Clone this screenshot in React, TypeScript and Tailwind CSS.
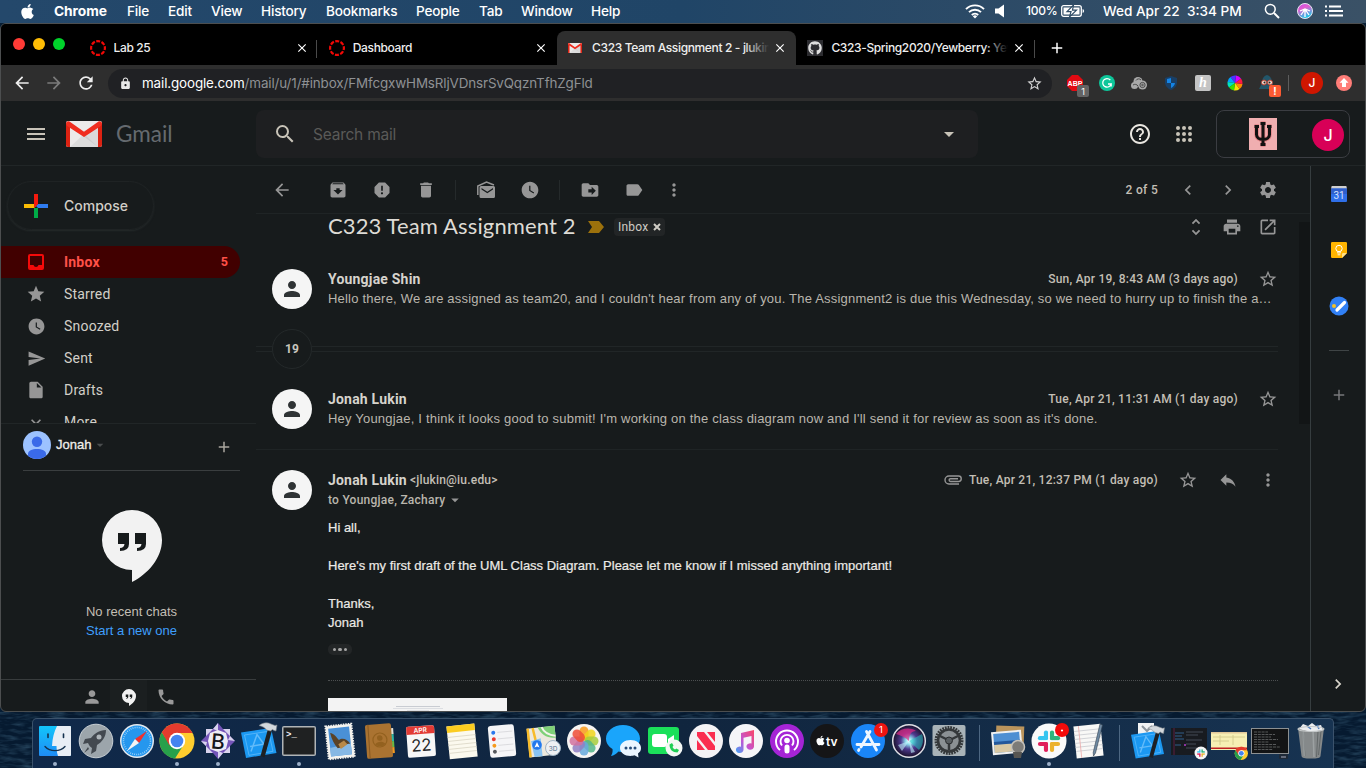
import React from "react";
import {
  MdArchive, MdReport, MdDelete, MdWatchLater, MdLabel, MdMoreVert, MdSettings, MdPrint,
  MdOpenInNew, MdUnfoldMore, MdStarBorder, MdReply, MdStar, MdSend, MdInsertDriveFile,
  MdExpandMore, MdPerson, MdPhone, MdMenu, MdSearch, MdHelpOutline, MdLock,
  MdArrowBack, MdArrowForward, MdRefresh, MdArrowDropDown, MdChevronRight, MdChevronLeft,
  MdAdd, MdClose,
} from "react-icons/md";
import { FaApple, FaGithub } from "react-icons/fa";

const SANS = "font-['Inter','Liberation_Sans',sans-serif]";

/* ---------- macOS menu bar ---------- */

const menus: [string, string][] = [
  ["File", "w-[41px]"], ["Edit", "w-[43px]"], ["View", "w-[50px]"], ["History", "w-[65px]"],
  ["Bookmarks", "w-[90px]"], ["People", "w-[63px]"], ["Tab", "w-[42px]"], ["Window", "w-[70px]"], ["Help", "w-[40px]"],
];

function MenuBar() {
  return (
    <div className={`flex h-[23px] shrink-0 items-center bg-linear-to-r from-[#24486b] via-[#204567] to-[#3a5166] pl-[19px] text-[13.6px] font-medium text-white ${SANS}`}>
      <FaApple className="mr-[18px] size-[17px]" />
      <span className="w-[73px] text-[13.8px] font-bold tracking-[-0.1px]">Chrome</span>
      {menus.map(([m, w]) => (
        <span key={m} className={`${w} tracking-[-0.2px]`}>{m}</span>
      ))}
      <div className="ml-auto flex items-center">
        <svg width="20" height="16" viewBox="0 0 20 16" fill="none" stroke="#fff" strokeWidth="1.9">
          <path d="M1 6.2a12.6 12.6 0 0 1 18 0M4 9.2a8.4 8.4 0 0 1 12 0M6.8 12a4.6 4.6 0 0 1 6.4 0" />
          <path d="M10 15.5L7.800 13.300a3.200 3.200 0 0 1 4.400 0z" fill="#fff" stroke="none" />
        </svg>
        <svg className="ml-[10px]" width="10" height="14" viewBox="0 0 10 14"><path d="M0 4.500h3.500L9 .5v13L3.500 9.500H0z" fill="#fff" /></svg>
        <span className="ml-[21px] w-[35px] text-[12px] tracking-[-0.2px]">100%</span>
        <svg width="24" height="12" viewBox="0 0 24 12" fill="none">
          <rect x=".7" y=".7" width="19.600" height="10.600" rx="2" stroke="#fff" strokeWidth="1.300" />
          <rect x="2.500" y="2.500" width="16" height="7" fill="#fff" />
          <path d="M12.500 0L6 6.700h4L8.500 12 15.500 5.200h-4z" fill="#fff" stroke="#2f4c66" strokeWidth="1.200" />
          <path d="M21.600 4v4c2-.8 2-3.200 0-4z" fill="#fff" />
        </svg>
        <span className="ml-[18px] w-[161px] whitespace-pre">Wed Apr 22  3:34 PM</span>
        <svg width="16" height="16" viewBox="0 0 16 16" fill="none" stroke="#fff" strokeWidth="1.500"><circle cx="6.300" cy="6.300" r="4.900" /><path d="M10 10l5 5" strokeWidth="1.900" /></svg>
        <svg className="ml-[17px]" width="16" height="16" viewBox="0 0 16 16">
          <defs><linearGradient id="sb" x1="0" y1="0" x2=".4" y2="1"><stop stopColor="#c04be8" /><stop offset=".4" stopColor="#e25bd0" /><stop offset="1" stopColor="#21c8e8" /></linearGradient></defs>
          <circle cx="8" cy="8" r="7.500" fill="url(#sb)" stroke="#e9e6f2" />
          <path d="M8 6L4 12M8 6l4 6M8 6v8M3 8l5-2 5 2" stroke="#fff" strokeWidth="1.300" fill="none" />
        </svg>
        <svg className="ml-[12px] mr-[23px]" width="18" height="12" viewBox="0 0 18 12" stroke="#fff" strokeWidth="1.900"><path d="M0 1.500h2M4 1.500h12M0 6h2M4 6h14M0 10.500h2M4 10.500h14" /></svg>
      </div>
    </div>
  );
}

/* ---------- Chrome tab strip and toolbar ---------- */

function GmailM({ className }: { className?: string }) {
  return (
    <svg className={className} viewBox="0 0 36 26">
      <rect x="0" y="0" width="36" height="26" rx="2" fill="#eceaea" />
      <path d="M4 26L18 13l14 13z" fill="#dcdcdc" />
      <path d="M32 4v22L13 12z" fill="#000" opacity=".07" />
      <path d="M0 2.500V24a2 2 0 0 0 2 2h2V5zM36 2.500V24a2 2 0 0 1-2 2h-2V5z" fill="#dc2212" />
      <path d="M0 2.500C0 .5 2 0 3.500.5L18 10.800 32.500.5C34 0 36 .5 36 2.500c0 1.200-.6 2-1.500 2.700L18 16 1.500 5.200C.6 4.500 0 3.700 0 2.500z" fill="#f02d1f" />
    </svg>
  );
}

const Canvas = () => (
  <svg className="size-4" viewBox="0 0 16 16"><circle cx="8" cy="8" r="6.900" fill="none" stroke="#f00806" strokeWidth="2.200" strokeDasharray="4 1.419" strokeDashoffset="2" /></svg>
);

function Tab({ icon, title, active, line, fade }: { icon: React.ReactNode; title: string; active?: boolean; line?: boolean; fade?: boolean }) {
  return (
    <div className={`relative flex h-[34px] w-[239.300px] shrink-0 items-center rounded-t-[8px] pl-[11.500px] ${active ? "bg-[#2e2e2e]" : ""}`}>
      {icon}
      <div className="relative ml-2 w-[177px] overflow-hidden whitespace-nowrap text-[12px] font-medium tracking-[-0.36px] text-[#eee]">
        {title}
        {fade && <span className={`absolute inset-y-0 right-0 w-6 bg-linear-to-r from-transparent ${active ? "to-[#2e2e2e]" : "to-black"}`} />}
      </div>
      <MdClose className="ml-[4px] size-[14px] text-white" />
      {line && <span className="absolute right-0 top-[9px] h-[18px] w-px bg-[#4a4a4a]" />}
    </div>
  );
}

function TabStrip() {
  return (
    <div className={`flex h-[41px] shrink-0 items-end bg-black ${SANS}`}>
      <div className="flex h-[41px] w-[77px] items-center gap-2 pb-[2px] pl-[12px]">
        <span className="size-3 rounded-full bg-[#ff3b36]" />
        <span className="size-3 rounded-full bg-[#ffbd05]" />
        <span className="size-3 rounded-full bg-[#00d32b]" />
      </div>
      <Tab icon={<Canvas />} title="Lab 25" line />
      <Tab icon={<Canvas />} title="Dashboard" />
      <Tab icon={<span className="flex size-4 items-center"><GmailM className="w-[14px]" /></span>} title="C323 Team Assignment 2 - jlukin@iu.edu" active fade />
      <Tab icon={<span className="flex size-4 items-center justify-center bg-[#2c2c30]"><FaGithub className="size-[14px] text-[#ddd]" /></span>} title="C323-Spring2020/Yewberry: Yewberry" line fade />
      <div className="flex h-[34px] items-center pl-[13px]"><MdAdd className="size-[18px] text-white" /></div>
    </div>
  );
}

function Extensions() {
  return (
    <div className="flex items-center pl-[15px]">
      <span className="relative mr-4 size-4">
        <svg className="size-4" viewBox="0 0 16 16"><path d="M5 0h6l5 5v6l-5 5H5l-5-5V5z" fill="#e20a12" /><text x="8" y="10.600" textAnchor="middle" fontSize="7" fontWeight="700" fontFamily="Liberation Sans" fill="#fff">ABP</text></svg>
        <span className="absolute left-[10px] top-[10px] flex h-3 w-3 items-center justify-center rounded-[2px] bg-[#646464] text-[9px] leading-none text-white">1</span>
      </span>
      <svg className="mr-4 size-4" viewBox="0 0 16 16"><circle cx="8" cy="8" r="8" fill="#0dc69a" /><path d="M11.300 5a4.300 4.300 0 1 0 .9 4H9M12.200 9v2.500" fill="none" stroke="#fff" strokeWidth="1.300" /></svg>
      <svg className="mr-4 size-4" viewBox="0 0 16 16"><g fill="#a9a9a9"><circle cx="7" cy="6.500" r="4.500" /><circle cx="3.500" cy="10.500" r="3.500" /><circle cx="11.500" cy="10" r="4.500" /></g><g fill="none" stroke="#4a4a4a" strokeWidth="1"><circle cx="11.500" cy="10" r="2.600" /><circle cx="11.500" cy="10" r=".8" /><path d="M7 11a3.500 3.500 0 0 0-5-1M10 5a3 3 0 0 0-5 .5" /></g></svg>
      <svg className="mr-4 size-4" viewBox="0 0 16 16"><path d="M8 1l6 2v4c0 4-2.500 6.500-6 8-3.500-1.500-6-4-6-8V3z" fill="#193f66" /><path d="M8 3v5H4V4zM8 8h4c-.5 2.500-2 4-4 5z" fill="#1484e6" /></svg>
      <span className="mr-4 flex size-4 items-center justify-center rounded-[2px] bg-[#c4c4c4] font-['Liberation_Serif',serif] text-[14px] font-bold italic leading-none text-white">h</span>
      <svg className="mr-4 size-4" viewBox="-8 -8 16 16">
        {["#f6e500", "#ff8a00", "#ff1744", "#d400ff", "#4a33ff", "#00a2ff", "#00e5c0", "#38e000"].map((c, i) => (
          <path key={c} d="M0 0L2.900-7A7.500 7.500 0 0 1 7-2.900z" fill={c} transform={`rotate(${i * -45 + 120})`} />
        ))}
      </svg>
      <span className="relative mr-[13px] size-4">
        <svg className="size-4" viewBox="0 0 16 16"><path d="M8 0c4 1 5 5 6 10l2 4H0l2-4C3 5 4 1 8 0z" fill="#22566a" /><circle cx="5" cy="7.500" r="2.500" fill="#f1ded3" stroke="#b33a2b" /><circle cx="11" cy="7.500" r="2.500" fill="#f1ded3" stroke="#b33a2b" /><circle cx="5.500" cy="7.500" r="1" fill="#222" /><circle cx="10.500" cy="7.500" r="1" fill="#222" /></svg>
        <span className="absolute left-[10px] top-[10px] flex h-3 w-3 items-center justify-center rounded-[2px] bg-[#fb5a32] text-[10px] font-bold leading-none text-white">!</span>
      </span>
      <span className="h-4 w-px bg-[#5d5d5d]" />
      <span className="ml-[12px] flex size-[22px] items-center justify-center rounded-full bg-[#cf1600] text-[12px] font-medium text-white">J</span>
      <svg className="ml-[13px] size-4" viewBox="0 0 16 16"><circle cx="8" cy="8" r="8" fill="#ff7d78" /><path d="M8 3l4.500 4.800H10V12H6V7.800H3.500z" fill="#fff" /></svg>
    </div>
  );
}

function Toolbar() {
  return (
    <div className={`flex h-[36px] shrink-0 items-center bg-[#2e2e2e] pl-[11px] ${SANS}`}>
      <MdArrowBack className="size-[20px] text-[#eee]" />
      <MdArrowForward className="ml-[12px] size-[20px] text-[#7b7b7b]" />
      <MdRefresh className="ml-[12px] size-[20px] text-[#eee]" />
      <div className="ml-[12px] flex h-[29px] w-[944px] items-center rounded-full bg-[#202124] pl-[11px]">
        <MdLock className="size-[13px] text-[#e8e8e8]" />
        <span className="ml-[10px] text-[13.400px] tracking-[-0.12px] text-[#8f9194]"><span className="text-white">mail.google.com</span>/mail/u/1/#inbox/FMfcgxwHMsRljVDnsrSvQqznTfhZgFld</span>
        <MdStarBorder className="ml-auto mr-[9px] size-[17px] text-[#d0d0d0]" />
      </div>
      <Extensions />
    </div>
  );
}

/* ---------- Gmail ---------- */

function Header() {
  return (
    <header className="flex h-[65px] shrink-0 items-center border-b border-[#212627] pl-[23px] pr-[15px] pt-[2px] text-[#c8c3b8]">
      <MdMenu className="size-6" />
      <GmailM className="ml-[18px] w-[36px]" />
      <span className="ml-[14px] w-[140px] font-['Lato',sans-serif] text-[22.500px] text-[#656a6f]">Gmail</span>
      <div className="flex h-[48px] w-[722px] items-center rounded-lg bg-[#1e1f21] pl-[17px] pr-[17px]">
        <MdSearch className="size-6" />
        <span className={`ml-4 mt-px text-[15.500px] tracking-[-0.230px] text-[#5a5a58] ${SANS}`}>Search mail</span>
        <MdArrowDropDown className="ml-auto size-6" />
      </div>
      <MdHelpOutline className="ml-auto size-6 text-[#e9e6e0]" />
      <svg className="ml-5 size-6" viewBox="0 0 24 24" fill="currentColor">
        {[6, 12, 18].map((y) => [6, 12, 18].map((x) => <circle key={`${x}-${y}`} cx={x} cy={y} r="2" />))}
      </svg>
      <div className="ml-5 flex h-[48px] w-[134px] items-center justify-end rounded-lg border border-[#3b3d42] pr-[5px]">
        <svg className="h-[32px] w-[28px]" viewBox="0 0 28 32">
          <rect width="28" height="32" fill="#f0aeb0" />
          <path d="M14 5v22M11.500 5.500h5M11.500 26.500h5M7.500 8.500v8c0 3 2.500 5 6.500 5s6.500-2 6.500-5v-8M5.500 8.500h4.500M18 8.500h4.500" fill="none" stroke="#e28286" strokeWidth="4.500" />
          <path d="M14 5v22M11.500 5.500h5M11.500 26.500h5M7.500 8.500v8c0 3 2.500 5 6.500 5s6.500-2 6.500-5v-8M5.500 8.500h4.500M18 8.500h4.500" fill="none" stroke="#111" strokeWidth="3" />
        </svg>
        <span className={`ml-[35px] mt-[2px] flex size-8 items-center justify-center rounded-full bg-[#d80057] text-[16px] font-medium text-white ${SANS}`}>J</span>
      </div>
    </header>
  );
}

const InboxIcon = () => (
  <svg className="size-4" viewBox="0 0 16 16"><path fillRule="evenodd" d="M2 0h12a2 2 0 0 1 2 2v12a2 2 0 0 1-2 2H2a2 2 0 0 1-2-2V2a2 2 0 0 1 2-2zm0 2v9h3.500a2.600 2.600 0 0 0 5 0H14V2z" fill="#f40a0a" /></svg>
);

function HangoutsMark({ className, ink }: { className: string; ink: string }) {
  return (
    <svg className={className} viewBox="0 0 60 72">
      <path d="M30 0a30 30 0 0 1 30 30c0 18-14 34-30 42V60A30 30 0 0 1 30 0z" fill="#f2f2f2" />
      <path d="M16 23h11v11q0 7-9 7v-3q4 0 4.500-4H16zM33 23h11v11q0 7-9 7v-3q4 0 4.500-4H33z" fill={ink} />
    </svg>
  );
}

function Sidebar() {
  const rows: [string, React.ReactNode][] = [
    ["Starred", <MdStar className="size-5" />],
    ["Snoozed", <MdWatchLater className="size-[19px]" />],
    ["Sent", <MdSend className="size-[19px]" />],
    ["Drafts", <MdInsertDriveFile className="size-5" />],
    ["More", <MdExpandMore className="size-5" />],
  ];
  return (
    <aside className="flex w-[255px] shrink-0 flex-col">
      <div className="h-[257px] shrink-0 overflow-hidden pt-[15px] font-['Roboto',sans-serif] text-[14px] text-[#d2cfc8]">
        <div className={`ml-[6px] flex h-[49px] w-[147px] items-center rounded-full border border-[#1f2324] pl-[16px] text-[14px] font-medium shadow-[0_1px_2px_#252a2b] ${SANS}`}>
          <svg className="size-6" viewBox="0 0 24 24"><path d="M10 0h4v10l-2 2-2-2z" fill="#f41a0e" /><path d="M0 10h10l2 2-2 2H0z" fill="#fbbc04" /><path d="M14 10h10v4H14l-2-2z" fill="#2f7cf0" /><path d="M10 14h4v10h-4z" fill="#00ac47" /><path d="M14 10l-4 4v-4z" fill="#f41a0e" /></svg>
          <span className="ml-[16px]">Compose</span>
        </div>
        <div className="mt-[16px] flex h-8 w-[239px] items-center rounded-r-full bg-[#410000] pl-[27px] pr-[12px] font-bold text-[#ff5148]">
          <InboxIcon />
          <span className="ml-5 tracking-[0.2px]">Inbox</span>
          <span className="ml-auto text-[12.500px]">5</span>
        </div>
        {rows.map(([label, icon]) => (
          <div key={label} className="flex h-8 items-center pl-[25px]">
            <span className="flex w-5 justify-center text-[#969696]">{icon}</span>
            <span className="ml-[18px] tracking-[0.2px]">{label}</span>
          </div>
        ))}
      </div>
      <div className="flex min-h-0 flex-1 flex-col border-t border-[#212627] font-['Liberation_Sans',sans-serif] text-[13px]">
        <div className="ml-[22px] flex h-[47px] w-[217px] items-center border-b border-[#3a3e3f]">
          <svg className="-mt-[5px] size-7" viewBox="0 0 28 28"><defs><clipPath id="av"><circle cx="14" cy="14" r="14" /></clipPath></defs><g clipPath="url(#av)"><rect width="28" height="28" fill="#9cc2ff" /><circle cx="14" cy="10.800" r="5.200" fill="#3a6ae8" /><path d="M5 28v-5c0-3.500 4-5 9-5s9 1.500 9 5v5z" fill="#3a6ae8" /></g></svg>
          <span className="-mt-[5px] ml-[5px] text-[#f0eeea] [-webkit-text-stroke:0.3px_#f0eeea]">Jonah</span>
          <MdArrowDropDown className="-mt-[5px] ml-px size-4 text-[#4b4e4f]" />
          <MdAdd className="ml-auto mr-[7px] size-[18px] text-[#aaa79e]" />
        </div>
        <div className="flex flex-1 flex-col items-center pl-[6px] pt-[39px]">
          <HangoutsMark className="h-[72px] w-[60px]" ink="#171b1c" />
          <span className="mt-[20px] leading-[19px] text-[#c3bfb5]">No recent chats</span>
          <span className="leading-[19px] text-[#3f9ffc]">Start a new one</span>
        </div>
        <div className="flex h-[32px] shrink-0 border-t border-[#383c3d] pl-[72px] text-[#999]">
          <span className="flex w-[37px] items-center justify-center pt-[3px]"><MdPerson className="size-[20px]" /></span>
          <span className="flex w-[37px] items-center justify-center bg-[#1b1f20] pt-[3px]"><HangoutsMark className="h-[17px] w-[14px]" ink="#171b1c" /></span>
          <span className="flex w-[37px] items-center justify-center pt-[3px]"><MdPhone className="size-[20px]" /></span>
        </div>
      </div>
    </aside>
  );
}

function ActionBar() {
  return (
    <div className="flex h-[48px] shrink-0 items-center border-b border-[#1f2425] pl-4 pr-8 text-[#969696]">
      <MdArrowBack className="size-[20px]" />
      <MdArchive className="ml-[36px] size-[20px]" />
      <MdReport className="ml-[24px] size-[20px]" />
      <MdDelete className="ml-[24px] size-[20px]" />
      <span className="ml-[19px] h-5 w-px bg-[#252a2b]" />
      <svg className="ml-[20px] size-[20px]" viewBox="0 0 20 20"><path d="M1.800 15V6L10.500 2l7.500 3" fill="none" stroke="#969696" strokeWidth="1.500" /><path fillRule="evenodd" d="M5 6h12.500A1.500 1.500 0 0 1 19 7.500V16.500a1.500 1.500 0 0 1-1.500 1.500H5a1.500 1.500 0 0 1-1.500-1.500v-9A1.500 1.500 0 0 1 5 6zm.5 2l5.800 3.800L17 8v1.600l-5.700 3.700-5.800-3.700z" fill="#969696" /></svg>
      <MdWatchLater className="ml-[24px] size-[20px]" />
      <span className="ml-[19px] h-5 w-px bg-[#252a2b]" />
      <svg className="ml-[20px] size-[20px]" viewBox="0 0 24 24"><path d="M20 6h-8l-2-2H4c-1.100 0-2 .9-2 2v12c0 1.100.9 2 2 2h16c1.100 0 2-.9 2-2V8c0-1.100-.9-2-2-2zm-6 12v-3h-4v-4h4V8l5 5-5 5z" fill="#969696" /></svg>
      <MdLabel className="ml-[24px] size-[20px]" />
      <MdMoreVert className="ml-[20px] size-5" />
      <span className="ml-auto mr-5 font-['Roboto',sans-serif] text-[12px] font-medium tracking-[0.300px] text-[#c3bfb5]">2 of 5</span>
      <MdChevronLeft className="mr-5 size-5" />
      <MdChevronRight className="mr-5 size-5" />
      <MdSettings className="size-5" />
    </div>
  );
}

const Avatar = () => (
  <span className="flex size-10 shrink-0 items-center justify-center rounded-full bg-[#f5f5f5]"><MdPerson className="size-6 text-[#2f3335]" /></span>
);

function Collapsed({ name, date, text }: { name: string; date: string; text: string }) {
  return (
    <div className="flex h-[40px] gap-4 pl-4 font-['Roboto',sans-serif]">
      <Avatar />
      <div className="min-w-0 flex-1">
        <div className="flex h-5 items-center">
          <span className="text-[14px] font-bold tracking-[0.200px] text-[#d6d3cc]">{name}</span>
          <span className="ml-auto text-[12px] font-medium tracking-[0.240px] text-[#c3bfb5]">{date}</span>
          <MdStarBorder className="ml-[20px] size-5 text-[#969696]" />
        </div>
        <div className="h-5 truncate pr-[5px] font-['Liberation_Sans',sans-serif] text-[13px] leading-[19px] tracking-[0.200px] text-[#bab6ad]">{text}</div>
      </div>
    </div>
  );
}

function Conversation() {
  return (
    <div className="flex w-[1022px] shrink-0 flex-col font-['Roboto',sans-serif]">
      <div className="flex h-[26px] items-center pl-[72px] text-[#969696]">
        <span className="-mt-[3px] w-[248px] whitespace-nowrap font-['Lato',sans-serif] text-[22px] tracking-[0.130px] text-[#dedbd5]">C323 Team Assignment 2</span>
        <svg className="ml-[12px] h-3 w-4" viewBox="0 0 16 12"><path d="M0 0h11l5 6-5 6H0l4-6z" fill="#9c710c" /></svg>
        <span className="ml-[10px] flex h-[18px] items-center rounded-[4px] bg-[#222526] px-1 text-[12px] tracking-[0.2px] text-[#cfccc4]">Inbox<svg className="ml-[5px] size-[8px]" viewBox="0 0 8 8" stroke="currentColor" strokeWidth="2"><path d="M1 1l6 6M7 1L1 7" /></svg></span>
        <MdUnfoldMore className="ml-auto size-[22px]" />
        <MdPrint className="ml-[15px] size-5" />
        <MdOpenInNew className="ml-4 size-5" />
      </div>
      <div className="mt-[29px]"><Collapsed name="Youngjae Shin" date="Sun, Apr 19, 8:43 AM (3 days ago)" text="Hello there, We are assigned as team20, and I couldn't hear from any of you. The Assignment2 is due this Wednesday, so we need to hurry up to finish the assignment soon." /></div>
      <div className="mt-[20px] flex h-10 items-center">
        <span className="h-[6px] w-4 border-y border-[#212627]" />
        <span className="flex size-10 items-center justify-center rounded-full border border-[#24292a] text-[12px] font-bold text-[#c9c6be]">19</span>
        <span className="h-[6px] flex-1 border-y border-[#212627]" />
      </div>
      <div className="mt-[20px]"><Collapsed name="Jonah Lukin" date="Tue, Apr 21, 11:31 AM (1 day ago)" text="Hey Youngjae, I think it looks good to submit! I'm working on the class diagram now and I'll send it for review as soon as it's done." /></div>
      <div className="mt-[20px] flex flex-1 gap-4 border-t border-[#1f2425] pl-4 pt-[20px]">
        <Avatar />
        <div className="flex min-w-0 flex-1 flex-col">
          <div className="flex h-5 shrink-0 items-center text-[#969696]">
            <span className="text-[14px] font-bold tracking-[0.200px] text-[#d6d3cc]">Jonah Lukin</span>
            <span className="ml-[3px] text-[12px] font-medium tracking-[0.200px] text-[#c3bfb5]">&lt;jlukin@iu.edu&gt;</span>
            <svg className="ml-auto h-[10px] w-[18px]" viewBox="0 0 18 10" fill="none" stroke="#969696" strokeWidth="1.400"><path d="M15 9H5a4 4 0 0 1 0-8h9.500a2.700 2.700 0 0 1 0 5.500H6.500a1.400 1.400 0 0 1 0-2.800H14" /></svg>
            <span className="ml-[7px] text-[12px] font-medium tracking-[0.230px] text-[#c3bfb5]">Tue, Apr 21, 12:37 PM (1 day ago)</span>
            <MdStarBorder className="ml-5 size-5" />
            <MdReply className="ml-5 size-[20px]" />
            <MdMoreVert className="ml-5 size-5" />
          </div>
          <div className="flex h-5 shrink-0 items-center text-[12px] font-medium tracking-[0.250px] text-[#bab6ad]">to Youngjae, Zachary<MdArrowDropDown className="ml-px size-[18px] text-[#969696]" /></div>
          <div className="mt-[8px] whitespace-pre font-['Liberation_Sans',sans-serif] text-[13px] leading-[19px] text-[#eceae6] [-webkit-text-stroke:0.2px_#eceae6]">{"Hi all,\n\nHere's my first draft of the UML Class Diagram. Please let me know if I missed anything important!\n\nThanks,\nJonah"}</div>
          <div className="mt-[12px] flex h-[11px] w-6 shrink-0 items-center justify-center gap-[2px] rounded-[5px] bg-[#232627]">
            <i className="size-[3.500px] rounded-full bg-[#a6a6a6]" /><i className="size-[3.500px] rounded-full bg-[#a6a6a6]" /><i className="size-[3.500px] rounded-full bg-[#a6a6a6]" />
          </div>
          <div className="mt-[25px] w-[950px] border-t border-dotted border-[#4c4f50]" />
          <div className="mt-[17px] flex h-[14px] w-[179px] flex-col items-center bg-[#f3f3f3] pt-[8px]">
            <div className="h-px w-[44px] bg-[#c9ccd2]" /><div className="mt-px h-px w-[50px] bg-[#dcdee2]" /><div className="mt-px h-px w-[22px] bg-[#dcdee2]" />
          </div>
        </div>
      </div>
    </div>
  );
}

function SidePanel() {
  return (
    <div className="flex w-[55px] shrink-0 flex-col items-center border-l border-[#363d3f] pl-[2px] pt-[20px]">
      <svg className="size-4" viewBox="0 0 16 16"><rect x=".3" width="15.400" height="5" rx="1" fill="#cfcfcf" /><rect y="2.500" width="16" height="13.500" rx="1" fill="#2f6fe8" /><path d="M0 2.500h16V8H0z" fill="#2f5fcb" /><text x="8" y="12.800" textAnchor="middle" fontSize="10" fontFamily="Roboto" fill="#d5e2ff">31</text></svg>
      <svg className="mt-10 size-4" viewBox="0 0 16 16"><path d="M1.200 0h13.600A1.200 1.200 0 0 1 16 1.200V11l-5 5H1.200A1.200 1.200 0 0 1 0 14.800V1.200A1.200 1.200 0 0 1 1.200 0z" fill="#ffb400" /><path d="M16 11l-5 5v-3.800A1.200 1.200 0 0 1 12.200 11z" fill="#ffe08a" /><circle cx="8" cy="6.500" r="3.200" fill="none" stroke="#fff" strokeWidth="1" /><path d="M6.300 11h3.400M6.600 12.800h2.800M6.800 9.300v1.500M9.200 9.300v1.500" stroke="#fff" strokeWidth=".9" /></svg>
      <svg className="mt-[38px] size-5" viewBox="0 0 20 20"><circle cx="10" cy="10" r="9.500" fill="#3180f5" /><path d="M8 14l7.500-7.500" stroke="#fff" strokeWidth="3.200" strokeLinecap="round" /><circle cx="5" cy="10" r="2" fill="#f6c026" /></svg>
      <span className="mt-[34px] h-px w-5 shrink-0 bg-[#3f4445]" />
      <MdAdd className="mt-[35px] size-[18px] text-[#77787a]" />
      <MdChevronRight className="mb-[17px] mr-[2px] mt-auto size-5 text-[#d8d4ca]" />
    </div>
  );
}

/* ---------- Dock ---------- */

const S = ({ children }: { children: React.ReactNode }) => <svg className="size-9 overflow-visible" viewBox="0 0 36 36">{children}</svg>;

const Chrome = () => (
  <>
    <circle cx="18" cy="18" r="17.500" fill="#ffcd2e" />
    <path d="M2.800 9.300A17.500 17.500 0 0 0 16 35.400L24.500 22 18 18 11.500 22z" fill="#27a04b" />
    <path d="M2.800 9.300L10.500 22.500 18 10h15.500A17.500 17.500 0 0 0 2.800 9.300z" fill="#e33b2e" />
    <circle cx="18" cy="18" r="8.200" fill="#fff" /><circle cx="18" cy="18" r="6.300" fill="#4484f0" />
  </>
);

const Hammer = () => (
  <g><path d="M27.500 4L19.500 33l4 1.500 8-29z" fill="#1d2024" /><path d="M18 2.500c4-3 8-3.500 12-1.500l4 1.500 2-.5-1 6-2-.5-1.500-1-2 1.500-4-1c-1.500-2.500-4-3.500-7.500-4.500z" fill="#d3d8dc" stroke="#7b8288" strokeWidth=".6" /></g>
);

const Xcode = () => (
  <><path d="M0 9.500L30 5l5.500 25L5 35z" fill="#1b98f2" /><path d="M3.500 12l24-3.700 4.500 20-24 4z" fill="none" stroke="#5fbafb" strokeWidth=".8" /><path d="M10 28.500l6-17 10 14M9 23.500l18-3" stroke="#62bbfa" strokeWidth="1.500" fill="none" /><Hammer /></>
);

const SlackMark = () => (
  <g strokeWidth="4.200" strokeLinecap="round">
    <path d="M15 9.500v5.500" stroke="#36c5f0" /><path d="M9 15.200h6" stroke="#36c5f0" />
    <path d="M21 9.500v5.700" stroke="#2eb67d" /><path d="M21 15.200h6" stroke="#2eb67d" />
    <path d="M21 21h6" stroke="#ecb22e" /><path d="M21 21v6" stroke="#ecb22e" />
    <path d="M9 21h6" stroke="#e01e5a" /><path d="M15 21v6" stroke="#e01e5a" />
    <path d="M18 9v18M9 18.100h18" stroke="#fafafa" strokeWidth="1.400" />
  </g>
);

const F = "Inter, Liberation Sans";
type Item = { n: string; dot?: boolean; el?: React.ReactNode };
const dock: Item[] = [
  { n: "finder", dot: true, el: <><defs><linearGradient id="fi" x1="0" y1="0" x2="0" y2="1"><stop stopColor="#12c5fb" /><stop offset="1" stopColor="#1f8cf5" /></linearGradient></defs><rect x="2" y="3" width="32" height="30" rx="1" fill="url(#fi)" /><path d="M20 3h13a1 1 0 0 1 1 1v28a1 1 0 0 1-1 1H21c-1-3-1.400-6-1.500-10h-4.500C15.500 15 17 9 20 3z" fill="#e8eef5" /><path d="M11 11v3.500M26.500 11v3.500" stroke="#14324f" strokeWidth="1.600" strokeLinecap="round" /><path d="M8 23.500c5 5.500 15 5.500 20 0" fill="none" stroke="#14324f" strokeWidth="1.400" strokeLinecap="round" /></> },
  { n: "launchpad", el: <><circle cx="18" cy="18" r="16.800" fill="#9ca5ab" stroke="#c8cfd4" /><path d="M28 7c-7 0-12 4-15 8l-6 1-2 5 5-1c1 2 2 4 4 5l-1 6 5-3 1-6c5-3 9-8 9-15zM10 24l-4 6 5-4z" fill="#434950" /><circle cx="21" cy="14" r="2.500" fill="#aeb5ba" /></> },
  { n: "safari", el: <><circle cx="18" cy="18" r="17" fill="#e4e9ee" /><circle cx="18" cy="18" r="15.500" fill="#2597ee" /><circle cx="18" cy="18" r="13.500" fill="none" stroke="#d8efff" strokeWidth="1.500" strokeDasharray=".6 1.500" /><path d="M28 8L20 20l-4-4z" fill="#f0302d" /><path d="M8 28l8-12 4 4z" fill="#f4f4f4" /></> },
  { n: "chrome", dot: true, el: <Chrome /> },
  { n: "bbedit", dot: true, el: <><path d="M18 0l5 6h7v7l5 5-5 5v7h-7l-5 6-5-6H6v-7l-5-5 5-5V6h7z" fill="#7455b8" /><path d="M13 6L6 13V6zM23 6h7v7zM30 23v7h-7zM6 23l7 7H6zM18 0v8l-5-2zM35 18l-7-1 2-4zM18 36v-8l5 2zM1 18l6 1-1 4z" fill="#d9d4ee" /><path d="M18 7l8 3 2 8-2 8-8 3-8-3-2-8 2-8z" fill="#eeecf6" /><text x="18" y="26" textAnchor="middle" fontSize="21" fontWeight="500" fontFamily={F} fill="#16151c" transform="rotate(5 18 18)">B</text></> },
  { n: "xcode", el: <Xcode /> },
  { n: "terminal", dot: true, el: <><rect x="1" y="3" width="34" height="30" rx="2" fill="#b0b4b6" /><rect x="2.500" y="4.500" width="31" height="27" fill="#1f2122" /><text x="5" y="14" fontSize="9" fontWeight="700" fontFamily="Liberation Mono" fill="#f2f2f2">&gt;_</text></> },
  { n: "mail", el: <g transform="rotate(-6 18 18)"><rect x="5" y="2" width="26" height="33" fill="#f4f3ef" stroke="#f4f3ef" strokeWidth="2" strokeDasharray="1.500 1" /><rect x="7.500" y="4.500" width="21" height="28" fill="#4a90d6" /><path d="M7.500 24l21-3v11.500h-21z" fill="#86b8e4" /><path d="M9 9c4 1 6 5 8 8 3-2 8-1 11 5-3-1-5 0-7 2l-6 1c-3-4-5-9-6-16z" fill="#5a4227" /><path d="M16 21l6-3 3 4-7 4z" fill="#b98948" /></g> },
  { n: "contacts", el: <g transform="rotate(-4 18 18)"><path d="M29 6h3v6h-3z" fill="#e6e2d8" /><path d="M29 12h3v7h-3z" fill="#30b8a5" /><path d="M29 19h3v6h-3z" fill="#68b945" /><path d="M29 25h3v6h-3z" fill="#f19a22" /><rect x="4" y="1" width="26" height="34" rx="2" fill="#aa7331" /><path d="M7 1v34" stroke="#8a5a22" /><circle cx="18" cy="17" r="7" fill="none" stroke="#93611f" strokeWidth="1.200" /><circle cx="18" cy="15" r="2.800" fill="#93611f" /><path d="M13 21c2-3 8-3 10 0-2 3-8 3-10 0z" fill="#93611f" /></g> },
  { n: "calendar", el: <g transform="rotate(-4 18 18)"><rect x="4" y="3" width="28" height="31" rx="2" fill="#f7f7f7" /><path d="M4 11V5a2 2 0 0 1 2-2h24a2 2 0 0 1 2 2v6z" fill="#e23b35" /><text x="18" y="9.500" textAnchor="middle" fontSize="6.500" fontWeight="600" fontFamily={F} fill="#fff">APR</text><text x="18" y="28" textAnchor="middle" fontSize="16.500" fontFamily={F} fill="#26282a">22</text></g> },
  { n: "notes", el: <g transform="rotate(-6 18 18)"><rect x="4" y="2" width="28" height="33" fill="#fbf9ee" /><rect x="4" y="2" width="28" height="6.500" fill="#fbcc20" /><path d="M4 13h28M4 17h28M4 21h28M4 25h28M4 29h28" stroke="#d6d2c0" strokeWidth=".7" /></g> },
  { n: "reminders", el: <g transform="rotate(-5 18 18)"><rect x="5" y="2" width="26" height="32" rx="2.500" fill="#f5f5f7" /><circle cx="10" cy="9" r="2" fill="#2a78ee" /><circle cx="10" cy="15.500" r="2" fill="#ea3a30" /><circle cx="10" cy="22" r="2" fill="#f59a1d" /><circle cx="10" cy="28" r="2" fill="#56585d" /><path d="M14 9h15M14 15.500h15M14 22h15M14 28h15" stroke="#d6d6da" strokeWidth=".8" /></g> },
  { n: "maps", el: <><g transform="rotate(-6 18 18)"><rect x="3" y="4" width="28" height="29" fill="#ece8dd" /><path d="M14 4h17v12c-9 0-14-5-17-12z" fill="#7fd078" /><path d="M18 4c2 6 7 9 13 10" stroke="#f5f3ec" strokeWidth="2" fill="none" /><path d="M4 4v29M9 4l4 29" stroke="#f7bb2a" strokeWidth="2.500" /><path d="M6 17l10-2v18H8z" fill="#88c3f3" /></g><circle cx="12" cy="22" r="4.800" fill="#2278ed" /><path d="M12 19l2.500 5.500L12 23.500l-2.500 1z" fill="#fff" /><circle cx="28" cy="25" r="7.500" fill="#edf0f3" stroke="#9fb3c4" /><text x="28" y="27.500" textAnchor="middle" fontSize="6.500" fontFamily={F} fill="#56738c">3D</text></> },
  { n: "photos", el: <><circle cx="18" cy="18" r="17" fill="#f6f4f2" />{["#f99a1c", "#f1d51c", "#a7cd3c", "#52b58a", "#66a8dc", "#8f7fc4", "#d1719f", "#ef4c36"].map((c, i) => <rect key={c} x="13.500" y="3.500" width="9" height="14" rx="4.500" fill={c} opacity=".85" transform={`rotate(${i * 45} 18 18)`} />)}</> },
  { n: "messages", el: <><path d="M17 2c9.400 0 17 6 17 13.500S26.400 29 17 29c-1.500 0-3 0-4.500-.5C10 31 8 32.500 5 33c1-2 2-4 1.500-7C2.500 23.500 0 20 0 15.500 0 8 7.600 2 17 2z" fill="#1aa5fb" /><path d="M24.500 17c5.800 0 10.500 3.500 10.500 8 0 2.500-1 4-3 5.500l.5 4-4-2.200c-1 .2-2.500.7-4 .7-5.800 0-10.500-3.500-10.500-8s4.700-8 10.500-8z" fill="#eaf5ff" /><circle cx="20" cy="25" r="1.500" fill="#274d7a" /><circle cx="24.500" cy="25" r="1.500" fill="#274d7a" /><circle cx="29" cy="25" r="1.500" fill="#274d7a" /></> },
  { n: "facetime", el: <><rect x="1" y="4" width="31" height="27" rx="3" fill="#1be05a" /><rect x="5" y="11" width="15" height="13" rx="3" fill="#fff" /><path d="M21 16l6-4v11l-6-4z" fill="#fff" /><circle cx="27" cy="25" r="8.500" fill="#f3f7f4" /><path d="M22.500 21.500c0 5 3 8 8 8l1.500-2.500-2.600-1.600-1.400 1c-1.200-.6-2-1.400-2.500-2.500l1-1.400-1.500-2.500z" fill="#1fce55" /></> },
  { n: "news", el: <><circle cx="18" cy="18" r="17" fill="#f4f3f5" /><path d="M9 9h7l11 14v4h-7L9 13z" fill="#fa2e50" /><path d="M19 9h8v10zM9 17l8 10H9z" fill="#fa2e50" /></> },
  { n: "music", el: <><circle cx="18" cy="18" r="17" fill="#f5f5f8" /><defs><linearGradient id="mu" x1="1" y1="0" x2="0" y2="1"><stop stopColor="#fb4566" /><stop offset=".55" stopColor="#c255d2" /><stop offset="1" stopColor="#3ba6f8" /></linearGradient></defs><path d="M13 10l13-3v16.500a3.800 3.200 0 1 1-2.500-3V13l-8 1.800v12a3.800 3.200 0 1 1-2.500-3z" fill="url(#mu)" /></> },
  { n: "podcasts", el: <><circle cx="18" cy="18" r="17" fill="#a524d6" /><g fill="none" stroke="#fff" strokeWidth="1.900"><path d="M11 27a11 11 0 1 1 14 0" /><path d="M13 22.500a6.500 6.500 0 1 1 10 0" /></g><circle cx="18" cy="17.500" r="2.800" fill="#fff" /><rect x="15.500" y="21.500" width="5" height="9" rx="2.500" fill="#fff" /></> },
  { n: "tv", el: <><circle cx="18" cy="18" r="17" fill="#151517" /><FaApple x="6" y="12" size={11} color="#fff" /><text x="17" y="22.500" fontSize="12" fontWeight="600" fontFamily={F} fill="#fff">tv</text></> },
  { n: "appstore", el: <><circle cx="18" cy="18" r="17" fill="#1a86f8" /><g stroke="#eef6ff" strokeWidth="2.800" strokeLinecap="round" fill="none"><path d="M20 8.500L11 24M16.500 8.500L26.500 27M7 21.500h14M25 21.500h4M9 26.500l-.5 1" /></g><circle cx="31" cy="7" r="7" fill="#ee1411" /><text x="31" y="10.300" textAnchor="middle" fontSize="9.500" fontFamily={F} fill="#fff">1</text></> },
  { n: "siri", el: <><defs><radialGradient id="si"><stop stopColor="#fff" /><stop offset=".2" stopColor="#8edfee" /><stop offset=".5" stopColor="#4f3a90" /><stop offset="1" stopColor="#181028" /></radialGradient></defs><circle cx="18" cy="18" r="16.300" fill="url(#si)" stroke="#dfdfe6" strokeWidth="1.500" /><path d="M5 11c5-6 14-7 20-3-5 0-7 4-7 10C14 14 9 12 5 11z" fill="#e42a86" opacity=".7" /><path d="M18 18l13-7c2 5 1 12-3 16z" fill="#22d0c4" opacity=".5" /><path d="M18 18L7 22l4 6zM18 18l2 12 4-1z" fill="#bff4fb" opacity=".6" /></> },
  { n: "prefs", el: <><rect x="1.500" y="2" width="33" height="31" rx="2" fill="#a9b3b8" /><circle cx="18" cy="17.500" r="13" fill="none" stroke="#34383a" strokeWidth="3" strokeDasharray="1.800 .9" /><circle cx="18" cy="17.500" r="11" fill="#8b9194" stroke="#34383a" strokeWidth="2.600" /><path d="M18 17.500V27M18 17.500l-9-4.500M18 17.500l9-4.500" stroke="#34383a" strokeWidth="2.500" /><circle cx="18" cy="17.500" r="3.500" fill="#585e61" stroke="#2a2d2f" /></> },
  { n: "sep1" },
  { n: "preview", el: <><rect x="6" y="3" width="28" height="18" fill="#ba945c" transform="rotate(2 20 12)" /><g transform="rotate(-5 16 20)"><rect x="2" y="8" width="30" height="23" fill="#f0f1f2" /><rect x="4" y="10" width="26" height="19" fill="#4e8fd2" /><path d="M4 21c9-3 17 2 26-1v9H4z" fill="#d9c9a4" /><path d="M4 18h26v3H4z" fill="#24589b" /></g><circle cx="28" cy="24" r="6.500" fill="#7d7c78" stroke="#c5c2bb" strokeWidth="1.500" /><path d="M23 29h9l-1 6h-7z" fill="#575652" /></> },
  { n: "slack", dot: true, el: <><circle cx="18" cy="18" r="17.500" fill="#fafafa" /><SlackMark /><circle cx="31" cy="7" r="7" fill="#f40b0b" /><circle cx="31" cy="7.500" r="1.100" fill="#fff" /></> },
  { n: "textedit", el: <><g transform="rotate(-6 18 18)"><rect x="4" y="2" width="27" height="32" fill="#f8f8f6" /><path d="M4 7h27M4 11h27M4 15h27M4 19h27M4 23h27M4 27h27" stroke="#c9cbd0" strokeWidth=".8" /><path d="M9 2v32" stroke="#eba2a2" strokeWidth=".7" /></g><path d="M29 1l2.500 1-7 28-2 3-.3-3.500z" fill="#6f8aa3" stroke="#31404d" strokeWidth=".6" /></> },
  { n: "sep2" },
  { n: "project", el: <><path d="M8 0h16v12H8z" fill="#f2f3f4" /><path d="M12 3l5 5 5-5" stroke="#8f979e" fill="none" strokeWidth="2" /><g transform="translate(1 3) scale(.93)"><Xcode /></g></> },
  { n: "win1", el: <><rect x="0" y="5" width="36" height="27" fill="#181b20" /><path d="M3 5v27" stroke="#3a1c30" strokeWidth="2" /><path d="M4 10h9M4 13h7M4 16h9M4 22h6" stroke="#315f8a" strokeWidth="1" /><path d="M15 9h17M15 12h12M15 17h16M15 21h10M15 25h14" stroke="#48505b" strokeWidth=".9" /><circle cx="14" cy="22" r="1" fill="#b33cc9" /><circle cx="30" cy="30" r="6.500" fill="#f6f6f6" /><g transform="translate(23.500 23.500) scale(.36)"><SlackMark /></g></> },
  { n: "win2", el: <><rect x="0" y="9" width="36" height="18" fill="#f6efb4" /><path d="M0 9h36v1.500H0z" fill="#e0c79a" /><path d="M0 24.500h36v1.500H0z" fill="#be1e22" /><path d="M9 12v10M22 12v10M2 14h32M2 18h16" stroke="#cfc689" strokeWidth=".8" /><g transform="translate(23.500 23.500) scale(.38)"><Chrome /></g></> },
  { n: "win3", el: <><rect x="-1" y="5" width="38" height="26" fill="#8c9092" /><rect x="0" y="6" width="36" height="24" fill="#131415" /><path d="M2 9h14M2 11.500h21M2 14h17M2 16.500h24M2 19h15M2 21.500h22M2 24h26M2 26.500h19" stroke="#5d6061" strokeWidth=".9" strokeDasharray="3 .8" /><rect x="27" y="31" width="9" height="5" rx="1" fill="#1f2a38" /><path d="M29 34h5" stroke="#aab" /></> },
  { n: "trash", el: <><path d="M5 5h26l-3.500 28c-.3 2-3 2.500-9.500 2.500S9 35 8.500 33z" fill="#85898a" /><path d="M10 8l2 25M25 8l-1.500 26M28 8l-2.500 24" stroke="#5f6465" strokeWidth=".9" /><path d="M10 6l1.500 27M20 7l1 27" stroke="#b4babb" strokeWidth="1.500" opacity=".5" /><path d="M6 6l4-5 5 2 4-3 4 3 5-1 2 5-12 2z" fill="#eceef0" /><path d="M14 3l4 3M24 2l2 4" stroke="#4d7bbd" strokeWidth="1.500" /><ellipse cx="18" cy="6" rx="13" ry="2.500" fill="none" stroke="#c3c7c8" strokeWidth="1.200" /></> },
];

function Dock() {
  return (
    <div className="relative flex h-[56px] shrink-0 justify-center overflow-hidden bg-[#061a30]">
      <svg className="absolute inset-0" width="1366" height="56">
        <filter id="sea"><feTurbulence type="fractalNoise" baseFrequency=".06 .28" numOctaves="3" seed="4" /><feColorMatrix values="0 0 0 0 .1  0 0 0 0 .25  0 0 0 0 .38  1.300 0 0 0 -.52" /></filter>
        <rect width="1366" height="56" filter="url(#sea)" opacity=".6" />
      </svg>
      <div className="relative mt-[6px] flex w-[1302px] rounded-t-[5px] border border-b-0 border-[#3b526b] bg-linear-to-r from-[#10294a] via-[#10253e] to-[#173351] pl-[2px]">
        {dock.map((d) =>
          d.el ? (
            <div key={d.n} className="flex w-[40.650px] shrink-0 flex-col items-center pt-[4px]">
              <S>{d.el}</S>
              {d.dot && <i className="mt-[3px] size-[4px] rounded-full bg-[#9db0c9]" />}
            </div>
          ) : (
            <div key={d.n} className="flex w-[18px] shrink-0 justify-center pl-[2px] pt-[6px]"><i className="h-9 w-px bg-[#4d6782]" /></div>
          ),
        )}
      </div>
    </div>
  );
}

export default function App() {
  return (
    <div className="flex h-[768px] w-[1366px] flex-col overflow-hidden bg-[#071d33]">
      <MenuBar />
      <div className="flex h-[689px] w-[1366px] shrink-0 flex-col overflow-hidden rounded-[6px] border border-[#4c4e4f] bg-[#171b1c]">
        <TabStrip />
        <Toolbar />
        <Header />
        <div className="flex min-h-0 flex-1">
          <Sidebar />
          <main className="flex min-w-0 flex-1 flex-col overflow-hidden">
            <ActionBar />
            <div className="flex min-h-0 flex-1">
              <Conversation />
              <div className="ml-auto mt-[8px] h-[202px] w-[11px] bg-[#121516]" />
            </div>
          </main>
          <SidePanel />
        </div>
      </div>
      <Dock />
    </div>
  );
}
